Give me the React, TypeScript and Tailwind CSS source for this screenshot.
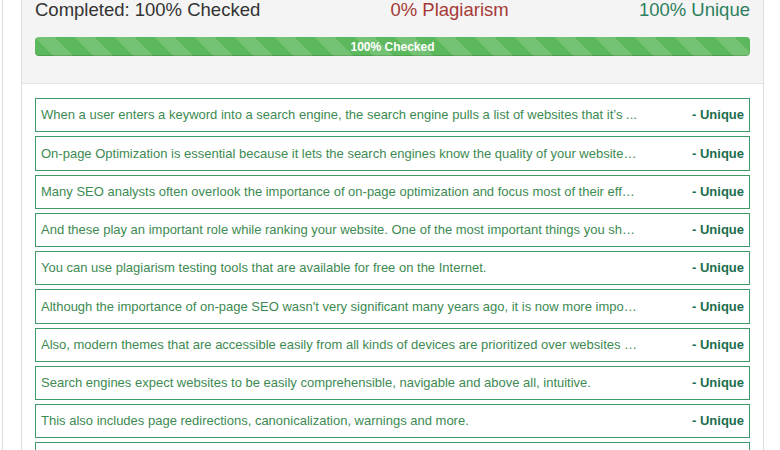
const rows: string[] = [
  "When a user enters a keyword into a search engine, the search engine pulls a list of websites that it\u2019s ...",
  "On-page Optimization is essential because it lets the search engines know the quality of your website\u2026",
  "Many SEO analysts often overlook the importance of on-page optimization and focus most of their eff\u2026",
  "And these play an important role while ranking your website. One of the most important things you sh\u2026",
  "You can use plagiarism testing tools that are available for free on the Internet.",
  "Although the importance of on-page SEO wasn't very significant many years ago, it is now more impo\u2026",
  "Also, modern themes that are accessible easily from all kinds of devices are prioritized over websites \u2026",
  "Search engines expect websites to be easily comprehensible, navigable and above all, intuitive.",
  "This also includes page redirections, canonicalization, warnings and more.",
  "",
];

export default function App() {
  return (
    <div className="w-[780px] h-[450px] overflow-hidden bg-white font-['Liberation_Sans',Arial,sans-serif]">
      <div className="ml-[2px] h-full border-l border-[#dddddd] pl-[18px]">
        <div className="w-[743px] h-full border-x border-[#dddddd]">
          {/* header */}
          <div className="h-[84px] bg-[#f4f4f4] border-b border-[#e3e3e3] px-[13px]">
            <div className="flex justify-between text-[18.5px] leading-[20px]">
              <span className="text-[#333333]">Completed: 100% Checked</span>
              <span className="text-[#a63a36]">0% Plagiarism</span>
              <span className="text-[#2e7f5e]">100% Unique</span>
            </div>
            <div className="mt-[17px] h-[19px] w-[715px] rounded-[4px] bg-[#5cb85c] bg-[linear-gradient(45deg,rgba(255,255,255,.15)_25%,transparent_25%,transparent_50%,rgba(255,255,255,.15)_50%,rgba(255,255,255,.15)_75%,transparent_75%,transparent)] bg-[length:40px_40px] shadow-[inset_0_-1px_0_rgba(0,0,0,.15)] flex items-center justify-center">
              <span className="text-white text-[12px] font-bold leading-none">100% Checked</span>
            </div>
          </div>
          {/* results */}
          <div className="pt-[14px] px-[13px] flex flex-col gap-[4px]">
            {rows.map((text, i) => (
              <div
                key={i}
                className="w-[715px] h-[34.25px] shrink-0 border border-[#3f9a68] flex items-center justify-between px-[5px] text-[13px]"
              >
                <span className="w-[620px] whitespace-nowrap overflow-hidden text-[#3d8a52]">{text}</span>
                {text && <span className="font-bold text-[#1c6d4d]">- Unique</span>}
              </div>
            ))}
          </div>
        </div>
      </div>
    </div>
  );
}
